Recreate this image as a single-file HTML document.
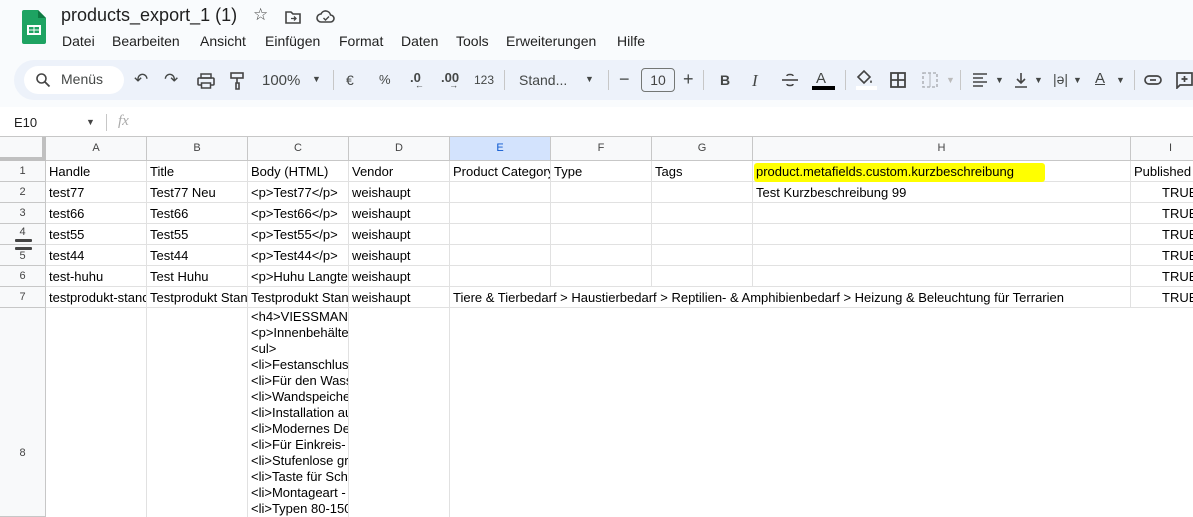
<!DOCTYPE html>
<html style="background:#fff"><head><meta charset="utf-8"><style>
*{margin:0;padding:0;box-sizing:border-box}
html,body{width:1193px;height:517px;overflow:hidden}
body{background:#f9fbfd;font-family:"Liberation Sans",Arial,sans-serif;position:relative;color:#1f1f1f}
.a{position:absolute;white-space:nowrap}
.tb{color:#444746;font-size:14px}
.c{position:absolute;font-size:13px;color:#000;white-space:nowrap;overflow:hidden;line-height:21px;padding-left:3px}
.h{position:absolute;background:#f8f9fa;color:#444;font-size:11px;text-align:center;line-height:23px;border-right:1px solid #c7c7c7;border-bottom:1px solid #c7c7c7}
.rh{position:absolute;left:0;width:46px;background:#f8f9fa;color:#444;font-size:11px;text-align:center;border-right:1px solid #c7c7c7;border-bottom:1px solid #c7c7c7}
.vl{position:absolute;width:1px;background:#e1e1e1}
.hl{position:absolute;height:1px;background:#e1e1e1}
</style></head><body>
<svg class="a" style="left:22px;top:10px" width="24" height="34" viewBox="0 0 24 34"><path d="M2 0h14l8 8v24a2 2 0 0 1-2 2H2a2 2 0 0 1-2-2V2a2 2 0 0 1 2-2z" fill="#1ea362"/><path d="M16 0l8 8h-8z" fill="#0f7a43"/><rect x="5" y="15" width="14" height="10" fill="#fff"/><rect x="7" y="17" width="4.5" height="2.5" fill="#1ea362"/><rect x="12.5" y="17" width="4.5" height="2.5" fill="#1ea362"/><rect x="7" y="20.5" width="4.5" height="2.5" fill="#1ea362"/><rect x="12.5" y="20.5" width="4.5" height="2.5" fill="#1ea362"/></svg>
<div class="a" style="left:61px;top:5px;font-size:18px;color:#1f1f1f">products_export_1 (1)</div>
<div class="a" style="left:253px;top:5px;font-size:17px;color:#444">☆</div>
<svg class="a" style="left:285px;top:10px" width="16" height="14"><path d="M1 2h5l2 2h7v9H1z" fill="none" stroke="#444" stroke-width="1.6"/><path d="M6 8.5h5M9 6.5l2 2-2 2" stroke="#444" stroke-width="1.3" fill="none"/></svg>
<svg class="a" style="left:316px;top:9px" width="20" height="15"><path d="M5 13a4 4 0 0 1 0-8 5 5 0 0 1 9.5 1 3.5 3.5 0 0 1 0 7z" fill="none" stroke="#444" stroke-width="1.6"/><path d="M7.5 9l2 2 3.5-3.5" stroke="#444" stroke-width="1.4" fill="none"/></svg>
<div class="a" style="left:62px;top:33px;font-size:14px;color:#1f1f1f">
<span class="a" style="left:0">Datei</span><span class="a" style="left:50px">Bearbeiten</span><span class="a" style="left:138px">Ansicht</span><span class="a" style="left:203px">Einfügen</span><span class="a" style="left:277px">Format</span><span class="a" style="left:339px">Daten</span><span class="a" style="left:394px">Tools</span><span class="a" style="left:444px">Erweiterungen</span><span class="a" style="left:555px">Hilfe</span></div>
<div class="a" style="left:14px;top:60px;width:1200px;height:40px;background:#edf2fa;border-radius:20px"></div>
<div class="a" style="left:24px;top:66px;width:100px;height:28px;background:#fff;border-radius:14px"></div>
<svg class="a" style="left:35px;top:72px" width="16" height="16"><circle cx="6.5" cy="6.5" r="4.5" fill="none" stroke="#444" stroke-width="1.6"/><path d="M10 10l4.5 4.5" stroke="#444" stroke-width="1.8"/></svg>
<div class="a tb" style="left:61px;top:71px">Menüs</div>
<div class="a tb" style="left:134px;top:70px;font-size:17px">↶</div>
<div class="a tb" style="left:164px;top:70px;font-size:17px">↷</div>
<svg class="a" style="left:197px;top:73px" width="18" height="16"><rect x="4" y="1" width="10" height="4" fill="none" stroke="#444" stroke-width="1.5"/><rect x="1" y="5" width="16" height="7" rx="1" fill="none" stroke="#444" stroke-width="1.6"/><rect x="4.5" y="10" width="9" height="5" fill="#edf2fa" stroke="#444" stroke-width="1.5"/></svg>
<svg class="a" style="left:230px;top:72px" width="14" height="18"><rect x="1" y="1" width="12" height="5" fill="none" stroke="#444" stroke-width="1.6"/><path d="M7 6v5M6 11h3v6H6z" fill="none" stroke="#444" stroke-width="1.6"/></svg>
<div class="a tb" style="left:262px;top:72px;font-size:15px">100%</div>
<div class="a tb" style="left:312px;top:74px;font-size:9px">▼</div>
<div class="a" style="left:333px;top:70px;width:1px;height:20px;background:#c7c7c7"></div>
<div class="a tb" style="left:346px;top:72px">€</div>
<div class="a tb" style="left:379px;top:72px;font-size:13px">%</div>
<div class="a tb" style="left:410px;top:70px;font-size:13px;font-weight:bold">.0<span style="font-size:9px;position:relative;top:6px;left:-6px">←</span></div>
<div class="a tb" style="left:441px;top:70px;font-size:13px;font-weight:bold">.00<span style="font-size:9px;position:relative;top:6px;left:-10px">→</span></div>
<div class="a tb" style="left:474px;top:73px;font-size:12px">123</div>
<div class="a" style="left:504px;top:70px;width:1px;height:20px;background:#c7c7c7"></div>
<div class="a tb" style="left:519px;top:72px">Stand...</div>
<div class="a tb" style="left:585px;top:74px;font-size:9px">▼</div>
<div class="a" style="left:608px;top:70px;width:1px;height:20px;background:#c7c7c7"></div>
<div class="a tb" style="left:619px;top:69px;font-size:18px">−</div>
<div class="a" style="left:641px;top:68px;width:34px;height:24px;border:1px solid #747775;border-radius:4px;font-size:14px;text-align:center;line-height:22px;color:#444">10</div>
<div class="a tb" style="left:683px;top:69px;font-size:18px">+</div>
<div class="a" style="left:703px;top:70px;width:1px;height:20px;background:#c7c7c7"></div>
<div class="a tb" style="left:720px;top:72px;font-weight:bold">B</div>
<div class="a tb" style="left:752px;top:71px;font-style:italic;font-family:'Liberation Serif',serif;font-size:17px">I</div>
<svg class="a" style="left:781px;top:72px" width="18" height="16"><path d="M12 4c0-2-6-2-6 0M6 12c0 2 6 2 6 0" fill="none" stroke="#444" stroke-width="1.6"/><path d="M1 8h16" stroke="#444" stroke-width="1.6"/></svg>
<div class="a tb" style="left:816px;top:70px;font-size:15px">A</div>
<div class="a" style="left:812px;top:86px;width:23px;height:4px;background:#000"></div>
<div class="a" style="left:845px;top:70px;width:1px;height:20px;background:#c7c7c7"></div>
<svg class="a" style="left:855px;top:69px" width="20" height="16"><path d="M3 8l6-6 6 6-6 6z" fill="none" stroke="#444" stroke-width="1.6"/><path d="M16 11c1 1.5 1.5 2.5 0 3-1.5-.5-1-1.5 0-3z" fill="#444"/></svg>
<div class="a" style="left:856px;top:86px;width:21px;height:4px;background:#fff"></div>
<svg class="a" style="left:890px;top:72px" width="16" height="16"><rect x="1" y="1" width="14" height="14" fill="none" stroke="#444" stroke-width="1.8"/><path d="M8 1v14M1 8h14" stroke="#444" stroke-width="1.8"/></svg>
<svg class="a" style="left:922px;top:72px" width="16" height="16" opacity=".35"><rect x="1" y="1" width="14" height="14" fill="none" stroke="#444" stroke-width="1.6" stroke-dasharray="3 2"/><path d="M8 1v14" stroke="#444"/></svg>
<div class="a tb" style="left:946px;top:75px;font-size:9px;color:#bbb">▼</div>
<div class="a" style="left:960px;top:70px;width:1px;height:20px;background:#c7c7c7"></div>
<svg class="a" style="left:972px;top:73px" width="16" height="14"><path d="M1 1h14M1 5h10M1 9h14M1 13h10" stroke="#444" stroke-width="1.6"/></svg>
<div class="a tb" style="left:995px;top:75px;font-size:9px">▼</div>
<svg class="a" style="left:1013px;top:72px" width="16" height="17"><path d="M8 1v10M4 7l4 4 4-4M2 15h12" fill="none" stroke="#444" stroke-width="1.6"/></svg>
<div class="a tb" style="left:1034px;top:75px;font-size:9px">▼</div>
<div class="a tb" style="left:1053px;top:71px;font-size:14px">|ə|</div>
<div class="a tb" style="left:1073px;top:75px;font-size:9px">▼</div>
<div class="a tb" style="left:1095px;top:70px;font-size:15px;text-decoration:underline">A</div>
<div class="a tb" style="left:1116px;top:75px;font-size:9px">▼</div>
<div class="a" style="left:1134px;top:70px;width:1px;height:20px;background:#c7c7c7"></div>
<svg class="a" style="left:1144px;top:74px" width="18" height="12"><rect x="1" y="2" width="16" height="8" rx="4" fill="none" stroke="#444" stroke-width="1.7"/><path d="M6 6h6" stroke="#444" stroke-width="1.7"/></svg>
<svg class="a" style="left:1175px;top:71px" width="18" height="18"><path d="M2 2h15v12H5l-3 3z" fill="none" stroke="#444" stroke-width="1.7"/><path d="M9.5 5v6M6.5 8h6" stroke="#444" stroke-width="1.7"/></svg>
<div class="a" style="left:0;top:107px;width:1193px;height:30px;background:#fff"></div>
<div class="a" style="left:14px;top:115px;font-size:13px;color:#1f1f1f">E10</div>
<div class="a" style="left:86px;top:117px;font-size:9px;color:#444">▼</div>
<div class="a" style="left:106px;top:114px;width:1px;height:17px;background:#c7c7c7"></div>
<div class="a" style="left:118px;top:113px;font-size:15px;color:#aaa;font-style:italic;font-family:'Liberation Serif',serif">fx</div>
<div class="a" style="left:0;top:137px;width:1193px;height:380px;background:#fff"></div>
<div class="a" style="left:0;top:136px;width:1193px;height:1px;background:#c7c7c7"></div>
<div class="h" style="left:0;top:137px;width:46px;height:24px;border-right:4px solid #c0c0c0;border-bottom:4px solid #c0c0c0"></div>
<div class="h" style="left:46px;top:137px;width:101px;height:24px">A</div>
<div class="h" style="left:147px;top:137px;width:101px;height:24px">B</div>
<div class="h" style="left:248px;top:137px;width:101px;height:24px">C</div>
<div class="h" style="left:349px;top:137px;width:101px;height:24px">D</div>
<div class="h" style="left:450px;top:137px;width:101px;height:24px;background:#d3e3fd;color:#0b57d0">E</div>
<div class="h" style="left:551px;top:137px;width:101px;height:24px">F</div>
<div class="h" style="left:652px;top:137px;width:101px;height:24px">G</div>
<div class="h" style="left:753px;top:137px;width:378px;height:24px">H</div>
<div class="h" style="left:1131px;top:137px;width:80px;height:24px">I</div>
<div class="rh" style="top:161px;height:21px;line-height:20px">1</div>
<div class="rh" style="top:182px;height:21px;line-height:20px">2</div>
<div class="rh" style="top:203px;height:21px;line-height:20px">3</div>
<div class="rh" style="top:224px;height:21px;line-height:16px">4</div>
<div class="rh" style="top:245px;height:21px;line-height:22px">5</div>
<div class="rh" style="top:266px;height:21px;line-height:20px">6</div>
<div class="rh" style="top:287px;height:21px;line-height:20px">7</div>
<div class="rh" style="top:308px;height:209px;line-height:290px">8</div>
<div class="a" style="left:15px;top:239px;width:17px;height:3px;background:#444;border-radius:1px"></div>
<div class="a" style="left:15px;top:247px;width:17px;height:3px;background:#444;border-radius:1px"></div>
<div class="hl" style="left:46px;top:181px;width:1147px"></div>
<div class="hl" style="left:46px;top:202px;width:1147px"></div>
<div class="hl" style="left:46px;top:223px;width:1147px"></div>
<div class="hl" style="left:46px;top:244px;width:1147px"></div>
<div class="hl" style="left:46px;top:265px;width:1147px"></div>
<div class="hl" style="left:46px;top:286px;width:1147px"></div>
<div class="hl" style="left:46px;top:307px;width:1147px"></div>
<div class="vl" style="left:146px;top:161px;height:356px"></div>
<div class="vl" style="left:247px;top:161px;height:356px"></div>
<div class="vl" style="left:348px;top:161px;height:356px"></div>
<div class="vl" style="left:449px;top:161px;height:356px"></div>
<div class="vl" style="left:550px;top:161px;height:126px"></div>
<div class="vl" style="left:651px;top:161px;height:126px"></div>
<div class="vl" style="left:752px;top:161px;height:126px"></div>
<div class="vl" style="left:1130px;top:161px;height:146px"></div>
<div class="a" style="left:754px;top:163px;width:291px;height:19px;background:#ffff00;border-radius:3px"></div>
<div class="c" style="left:46px;top:161px;width:100px">Handle</div>
<div class="c" style="left:147px;top:161px;width:100px">Title</div>
<div class="c" style="left:248px;top:161px;width:100px">Body (HTML)</div>
<div class="c" style="left:349px;top:161px;width:100px">Vendor</div>
<div class="c" style="left:450px;top:161px;width:100px">Product Category</div>
<div class="c" style="left:551px;top:161px;width:100px">Type</div>
<div class="c" style="left:652px;top:161px;width:100px">Tags</div>
<div class="c" style="left:753px;top:161px;width:377px">product.metafields.custom.kurzbeschreibung</div>
<div class="c" style="left:1131px;top:161px;width:62px">Published</div>
<div class="c" style="left:46px;top:182px;width:100px">test77</div>
<div class="c" style="left:147px;top:182px;width:100px">Test77 Neu</div>
<div class="c" style="left:248px;top:182px;width:100px">&lt;p&gt;Test77&lt;/p&gt;</div>
<div class="c" style="left:349px;top:182px;width:100px">weishaupt</div>
<div class="c" style="left:753px;top:182px;width:377px">Test Kurzbeschreibung 99</div>
<div class="c" style="left:46px;top:203px;width:100px">test66</div>
<div class="c" style="left:147px;top:203px;width:100px">Test66</div>
<div class="c" style="left:248px;top:203px;width:100px">&lt;p&gt;Test66&lt;/p&gt;</div>
<div class="c" style="left:349px;top:203px;width:100px">weishaupt</div>
<div class="c" style="left:46px;top:224px;width:100px">test55</div>
<div class="c" style="left:147px;top:224px;width:100px">Test55</div>
<div class="c" style="left:248px;top:224px;width:100px">&lt;p&gt;Test55&lt;/p&gt;</div>
<div class="c" style="left:349px;top:224px;width:100px">weishaupt</div>
<div class="c" style="left:46px;top:245px;width:100px">test44</div>
<div class="c" style="left:147px;top:245px;width:100px">Test44</div>
<div class="c" style="left:248px;top:245px;width:100px">&lt;p&gt;Test44&lt;/p&gt;</div>
<div class="c" style="left:349px;top:245px;width:100px">weishaupt</div>
<div class="c" style="left:46px;top:266px;width:100px">test-huhu</div>
<div class="c" style="left:147px;top:266px;width:100px">Test Huhu</div>
<div class="c" style="left:248px;top:266px;width:100px">&lt;p&gt;Huhu Langtext</div>
<div class="c" style="left:349px;top:266px;width:100px">weishaupt</div>
<div class="c" style="left:46px;top:287px;width:100px">testprodukt-standard</div>
<div class="c" style="left:147px;top:287px;width:100px">Testprodukt Standard</div>
<div class="c" style="left:248px;top:287px;width:100px">Testprodukt Standard</div>
<div class="c" style="left:349px;top:287px;width:100px">weishaupt</div>
<div class="c" style="left:450px;top:287px;width:680px">Tiere &amp; Tierbedarf &gt; Haustierbedarf &gt; Reptilien- &amp; Amphibienbedarf &gt; Heizung &amp; Beleuchtung für Terrarien</div>
<div class="c" style="left:1131px;top:182px;width:62px;padding-left:31px">TRUE</div>
<div class="c" style="left:1131px;top:203px;width:62px;padding-left:31px">TRUE</div>
<div class="c" style="left:1131px;top:224px;width:62px;padding-left:31px">TRUE</div>
<div class="c" style="left:1131px;top:245px;width:62px;padding-left:31px">TRUE</div>
<div class="c" style="left:1131px;top:266px;width:62px;padding-left:31px">TRUE</div>
<div class="c" style="left:1131px;top:287px;width:62px;padding-left:31px">TRUE</div>
<div class="c" style="left:248px;top:309px;width:100px;line-height:16px">&lt;h4&gt;VIESSMANN<br>&lt;p&gt;Innenbehälter<br>&lt;ul&gt;<br>&lt;li&gt;Festanschluss<br>&lt;li&gt;Für den Wasser<br>&lt;li&gt;Wandspeicher<br>&lt;li&gt;Installation auf<br>&lt;li&gt;Modernes Design<br>&lt;li&gt;Für Einkreis-<br>&lt;li&gt;Stufenlose gr<br>&lt;li&gt;Taste für Schnell<br>&lt;li&gt;Montageart -<br>&lt;li&gt;Typen 80-150</div>
</body></html>
